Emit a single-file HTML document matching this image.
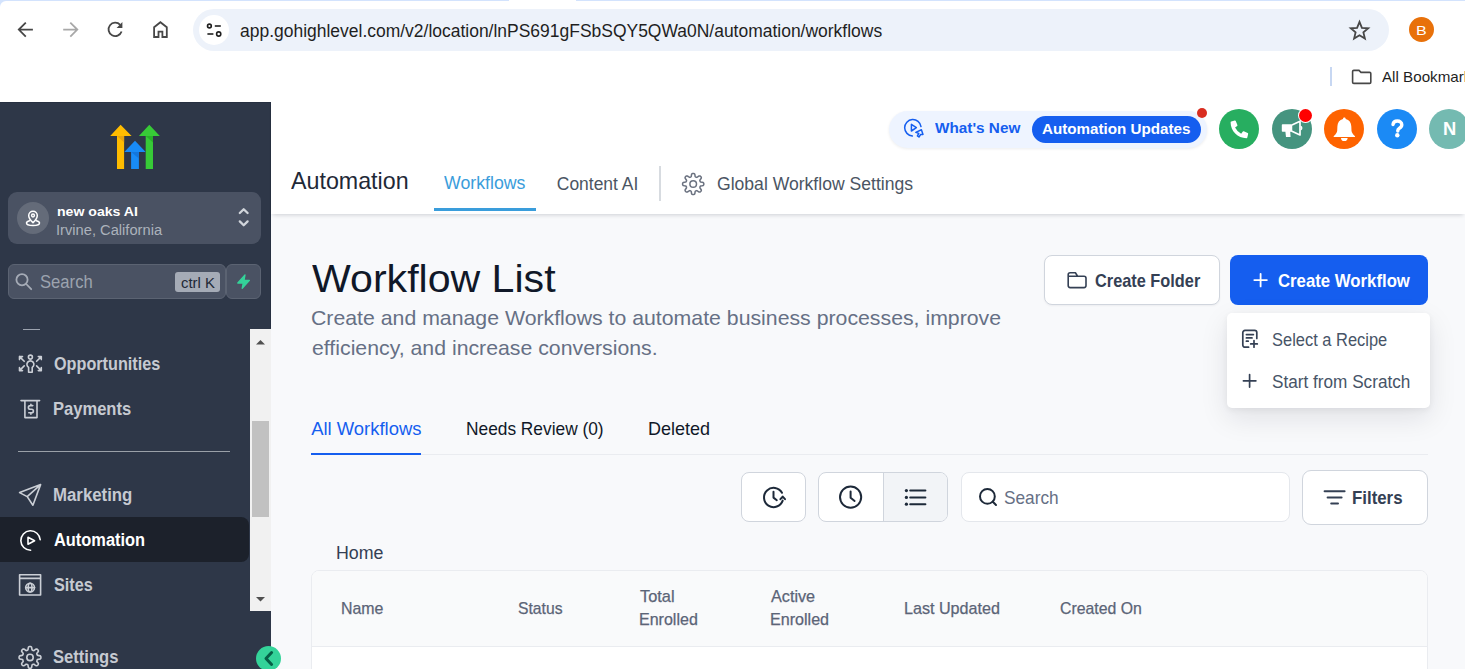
<!DOCTYPE html>
<html><head><meta charset="utf-8">
<style>
*{margin:0;padding:0;box-sizing:border-box}
html,body{width:1465px;height:669px;overflow:hidden;background:#fff;font-family:"Liberation Sans",sans-serif}
.a{position:absolute}
.t{position:absolute;white-space:nowrap;line-height:1}
</style></head><body>
<!-- ===== Browser chrome ===== -->
<div class="a" style="left:0;top:0;width:1465px;height:102px;background:#fff"></div>
<div class="a" style="left:0;top:0;width:1465px;height:10px;background:#d3e3fd"></div>
<div class="a" style="left:0;top:1px;width:1465px;height:20px;background:#fff;border-top-left-radius:6px"></div>
<div class="a" style="left:509px;top:0;width:67px;height:3px;background:#fff"></div>
<div class="a" style="left:193px;top:9px;width:1196px;height:42px;border-radius:21px;background:#edf2fa"></div>
<div class="a" style="left:199px;top:15px;width:30px;height:30px;border-radius:50%;background:#fff"></div>
<div class="a" style="left:1409px;top:17px;width:25px;height:25px;border-radius:50%;background:#e8710a"></div>
<div class="a" style="left:1330px;top:67px;width:2px;height:19px;background:#c7d7f2"></div>
<!-- ===== Sidebar ===== -->
<div class="a" style="left:0;top:102px;width:271px;height:567px;background:#2e3748"></div>
<div class="a" style="left:0;top:102px;width:271px;height:1px;background:#273041"></div>
<div class="a" style="left:270px;top:102px;width:1px;height:226px;background:#273041"></div>
<div class="a" style="left:8px;top:192px;width:253px;height:52px;border-radius:9px;background:#4a5263"></div>
<div class="a" style="left:17px;top:202px;width:32px;height:32px;border-radius:50%;background:#646b79"></div>
<div class="a" style="left:8px;top:264px;width:218px;height:35px;border-radius:6px;background:#4a5263;border:1px solid #5b6372"></div>
<div class="a" style="left:175px;top:272px;width:45px;height:20px;border-radius:3px;background:#a5abb6"></div>
<div class="a" style="left:226px;top:264px;width:35px;height:35px;border-radius:6px;background:#4a5263;border:1px solid #5b6372"></div>
<div class="a" style="left:250px;top:329px;width:21px;height:282px;background:#f1f1f1"></div>
<div class="a" style="left:252px;top:421px;width:17px;height:96px;background:#c1c1c1"></div>
<div class="a" style="left:0;top:517px;width:249px;height:45px;border-radius:0 8px 8px 0;background:#1c212b"></div>
<div class="a" style="left:23px;top:329px;width:17px;height:1px;background:#9ca3af"></div>
<div class="a" style="left:18px;top:451px;width:212px;height:1px;background:#9aa0a8"></div>
<!-- ===== Main ===== -->
<div class="a" style="left:271px;top:102px;width:1194px;height:567px;background:#f8f9fb"></div>
<div class="a" style="left:271px;top:102px;width:1194px;height:112px;background:#fff;box-shadow:0 3px 4px -2px rgba(16,24,40,.18)"></div>
<div class="a" style="left:434px;top:208px;width:102px;height:3px;background:#3a9ddb"></div>
<div class="a" style="left:659px;top:166px;width:2px;height:35px;background:#d7dbe0"></div>
<div class="a" style="left:889px;top:111px;width:318px;height:37px;border-radius:19px;background:#eef4ff;box-shadow:0 1px 3px rgba(16,24,40,.08)"></div>
<div class="a" style="left:1032px;top:116px;width:169px;height:27px;border-radius:14px;background:#155eef"></div>
<div class="a" style="left:1197px;top:108px;width:10px;height:10px;border-radius:50%;background:#d92d20"></div>
<div class="a" style="left:1219px;top:109px;width:40px;height:40px;border-radius:50%;background:#27ae60"></div>
<div class="a" style="left:1272px;top:109px;width:40px;height:40px;border-radius:50%;background:#45947f"></div>
<div class="a" style="left:1299px;top:108.5px;width:13px;height:13px;border-radius:50%;background:#ff0000;box-shadow:0 0 0 1px #fff"></div>
<div class="a" style="left:1324px;top:109px;width:40px;height:40px;border-radius:50%;background:#fe6300"></div>
<div class="a" style="left:1377px;top:109px;width:40px;height:40px;border-radius:50%;background:#1b8af5"></div>
<div class="a" style="left:1429px;top:109px;width:40px;height:40px;border-radius:50%;background:#74bab1"></div>
<!-- buttons -->
<div class="a" style="left:1044px;top:255px;width:176px;height:50px;border-radius:8px;background:#fff;border:1px solid #d0d5dd;box-shadow:0 1px 2px rgba(16,24,40,.05)"></div>
<div class="a" style="left:1230px;top:255px;width:198px;height:50px;border-radius:8px;background:#155eef"></div>
<div class="a" style="left:1227px;top:313px;width:203px;height:95px;border-radius:5px;background:#fff;box-shadow:0 10px 28px rgba(16,24,40,.10),0 2px 6px rgba(16,24,40,.06)"></div>
<!-- tabs -->
<div class="a" style="left:311px;top:454px;width:1117px;height:1px;background:#eaecf0"></div>
<div class="a" style="left:311px;top:452.5px;width:110px;height:2.5px;background:#155eef"></div>
<!-- toolbar -->
<div class="a" style="left:741px;top:472px;width:65px;height:50px;border-radius:8px;background:#fff;border:1px solid #d0d5dd"></div>
<div class="a" style="left:818px;top:472px;width:130px;height:50px;border-radius:8px;background:#fff;border:1px solid #d0d5dd;overflow:hidden"><div class="a" style="left:64px;top:0;width:1px;height:48px;background:#d0d5dd"></div><div class="a" style="left:65px;top:0;width:64px;height:48px;background:#f2f4f7"></div></div>
<div class="a" style="left:961px;top:472px;width:329px;height:50px;border-radius:8px;background:#fff;border:1px solid #e4e7ec"></div>
<div class="a" style="left:1302px;top:470px;width:126px;height:55px;border-radius:9px;background:#fff;border:1px solid #d0d5dd"></div>
<!-- table -->
<div class="a" style="left:311px;top:570px;width:1117px;height:110px;border-radius:8px;background:#fff;border:1px solid #eaecf0;overflow:hidden"><div class="a" style="left:0;top:0;width:1117px;height:76px;background:#f9fafb;border-bottom:1px solid #eaecf0"></div></div>
<div class="a" style="left:256px;top:646px;width:25px;height:25px;border-radius:50%;background:#34d399"></div>

<div class="t" style="left:240.00px;top:21.60px;font-size:18.90px;font-weight:400;color:#1f1f1f;transform:scaleX(0.9247);transform-origin:0 0;">app.gohighlevel.com/v2/location/lnPS691gFSbSQY5QWa0N/automation/workflows</div>
<div class="t" style="left:1382.30px;top:68.95px;font-size:15.41px;font-weight:400;color:#1f1f1f;transform:scaleX(0.9850);transform-origin:0 0;">All Bookmarks</div>
<div class="t" style="left:1415.61px;top:23.95px;font-size:13.52px;font-weight:400;color:#fff;transform:scaleX(1.1875);transform-origin:0 0;">B</div>
<div class="t" style="left:56.50px;top:205.23px;font-size:13.66px;font-weight:700;color:#ffffff;transform:scaleX(1.0315);transform-origin:0 0;">new oaks AI</div>
<div class="t" style="left:55.51px;top:223.25px;font-size:14.83px;font-weight:400;color:#acb2bc;transform:scaleX(0.9899);transform-origin:0 0;">Irvine, California</div>
<div class="t" style="left:39.50px;top:273.37px;font-size:18.46px;font-weight:400;color:#9ca3af;transform:scaleX(0.9026);transform-origin:0 0;">Search</div>
<div class="t" style="left:180.90px;top:275.10px;font-size:15.12px;font-weight:400;color:#1f2937;transform:scaleX(0.9872);transform-origin:0 0;">ctrl K</div>
<div class="t" style="left:53.50px;top:355.07px;font-size:18.46px;font-weight:700;color:#c6cad1;transform:scaleX(0.8789);transform-origin:0 0;">Opportunities</div>
<div class="t" style="left:52.57px;top:400.86px;font-size:17.88px;font-weight:700;color:#c6cad1;transform:scaleX(0.9263);transform-origin:0 0;">Payments</div>
<div class="t" style="left:52.89px;top:486.37px;font-size:18.46px;font-weight:700;color:#c6cad1;transform:scaleX(0.9112);transform-origin:0 0;">Marketing</div>
<div class="t" style="left:53.80px;top:531.37px;font-size:18.46px;font-weight:700;color:#ffffff;transform:scaleX(0.8898);transform-origin:0 0;">Automation</div>
<div class="t" style="left:53.80px;top:576.00px;font-size:18.90px;font-weight:700;color:#c6cad1;transform:scaleX(0.8562);transform-origin:0 0;">Sites</div>
<div class="t" style="left:53.00px;top:649.13px;font-size:17.44px;font-weight:700;color:#c6cad1;transform:scaleX(0.9517);transform-origin:0 0;">Settings</div>
<div class="t" style="left:291.40px;top:170.19px;font-size:23.40px;font-weight:400;color:#1f2937;transform:scaleX(0.9939);transform-origin:0 0;">Automation</div>
<div class="t" style="left:444.30px;top:174.93px;font-size:17.44px;font-weight:400;color:#3a9ddb;transform:scaleX(1.0165);transform-origin:0 0;">Workflows</div>
<div class="t" style="left:556.80px;top:175.93px;font-size:17.44px;font-weight:400;color:#4b5563;">Content AI</div>
<div class="t" style="left:717.00px;top:175.93px;font-size:17.44px;font-weight:400;color:#4b5563;transform:scaleX(1.0079);transform-origin:0 0;">Global Workflow Settings</div>
<div class="t" style="left:935.20px;top:120.03px;font-size:15.55px;font-weight:700;color:#155eef;transform:scaleX(0.9848);transform-origin:0 0;">What's New</div>
<div class="t" style="left:1042.30px;top:122.35px;font-size:14.83px;font-weight:700;color:#ffffff;transform:scaleX(1.0242);transform-origin:0 0;">Automation Updates</div>
<div class="t" style="left:1442.78px;top:119.64px;font-size:18.02px;font-weight:700;color:#ffffff;transform:scaleX(1.0182);transform-origin:0 0;">N</div>
<div class="t" style="left:311.80px;top:260.29px;font-size:38.52px;font-weight:400;color:#101828;transform:scaleX(1.0669);transform-origin:0 0;">Workflow List</div>
<div class="t" style="left:310.58px;top:308.38px;font-size:20.93px;font-weight:400;color:#667085;transform:scaleX(1.0167);transform-origin:0 0;">Create and manage Workflows to automate business processes, improve</div>
<div class="t" style="left:311.60px;top:338.38px;font-size:20.93px;font-weight:400;color:#667085;transform:scaleX(1.0167);transform-origin:0 0;">efficiency, and increase conversions.</div>
<div class="t" style="left:1094.60px;top:273.01px;font-size:17.59px;font-weight:700;color:#344054;transform:scaleX(0.9289);transform-origin:0 0;">Create Folder</div>
<div class="t" style="left:1278.40px;top:272.79px;font-size:17.73px;font-weight:700;color:#ffffff;transform:scaleX(0.9456);transform-origin:0 0;">Create Workflow</div>
<div class="t" style="left:1272.00px;top:331.12px;font-size:18.75px;font-weight:400;color:#475467;transform:scaleX(0.8778);transform-origin:0 0;">Select a Recipe</div>
<div class="t" style="left:1272.00px;top:373.00px;font-size:18.90px;font-weight:400;color:#475467;transform:scaleX(0.9090);transform-origin:0 0;">Start from Scratch</div>
<div class="t" style="left:311.20px;top:420.27px;font-size:18.46px;font-weight:400;color:#155eef;">All Workflows</div>
<div class="t" style="left:465.76px;top:420.27px;font-size:18.46px;font-weight:400;color:#101828;transform:scaleX(0.9391);transform-origin:0 0;">Needs Review (0)</div>
<div class="t" style="left:647.72px;top:420.27px;font-size:18.46px;font-weight:400;color:#101828;transform:scaleX(0.9760);transform-origin:0 0;">Deleted</div>
<div class="t" style="left:1003.80px;top:488.52px;font-size:18.17px;font-weight:400;color:#667085;transform:scaleX(0.9499);transform-origin:0 0;">Search</div>
<div class="t" style="left:1352.39px;top:489.07px;font-size:18.46px;font-weight:700;color:#344054;transform:scaleX(0.9135);transform-origin:0 0;">Filters</div>
<div class="t" style="left:335.88px;top:545.23px;font-size:17.44px;font-weight:400;color:#344054;transform:scaleX(1.0219);transform-origin:0 0;">Home</div>
<div class="t" style="left:341.31px;top:600.76px;font-size:15.99px;font-weight:400;color:#5b6477;transform:scaleX(0.9948);transform-origin:0 0;-webkit-text-stroke:0.25px #5b6477;">Name</div>
<div class="t" style="left:517.60px;top:600.76px;font-size:15.99px;font-weight:400;color:#5b6477;transform:scaleX(0.9826);transform-origin:0 0;-webkit-text-stroke:0.25px #5b6477;">Status</div>
<div class="t" style="left:640.30px;top:588.66px;font-size:15.99px;font-weight:400;color:#5b6477;transform:scaleX(1.0247);transform-origin:0 0;-webkit-text-stroke:0.25px #5b6477;">Total</div>
<div class="t" style="left:639.29px;top:611.69px;font-size:15.84px;font-weight:400;color:#5b6477;transform:scaleX(1.0130);transform-origin:0 0;-webkit-text-stroke:0.25px #5b6477;">Enrolled</div>
<div class="t" style="left:771.10px;top:588.66px;font-size:15.99px;font-weight:400;color:#5b6477;transform:scaleX(1.0130);transform-origin:0 0;-webkit-text-stroke:0.25px #5b6477;">Active</div>
<div class="t" style="left:770.08px;top:611.69px;font-size:15.84px;font-weight:400;color:#5b6477;transform:scaleX(1.0165);transform-origin:0 0;-webkit-text-stroke:0.25px #5b6477;">Enrolled</div>
<div class="t" style="left:903.59px;top:600.76px;font-size:15.99px;font-weight:400;color:#5b6477;transform:scaleX(1.0085);transform-origin:0 0;-webkit-text-stroke:0.25px #5b6477;">Last Updated</div>
<div class="t" style="left:1059.70px;top:600.76px;font-size:15.99px;font-weight:400;color:#5b6477;transform:scaleX(0.9894);transform-origin:0 0;-webkit-text-stroke:0.25px #5b6477;">Created On</div>
<svg class="a" style="left:0;top:0" width="1465" height="669" viewBox="0 0 1465 669" fill="none">
<!-- chrome icons -->
<g stroke="#474747" stroke-width="1.8" stroke-linecap="butt" stroke-linejoin="miter">
 <path d="M32.9 29.6H19.5 M25.8 22.6L18.8 29.6L25.8 36.6"/>
</g>
<g stroke="#a8a8a8" stroke-width="1.8">
 <path d="M63.2 29.6H76.6 M70.3 22.6L77.3 29.6L70.3 36.6"/>
</g>
<g stroke="#474747" stroke-width="1.8" fill="none">
 <path d="M121.6 31.5 A6.7 6.7 0 1 1 120.2 24.8"/>
 <path d="M122.4 22.1V28.1H116.6Z" fill="#474747" stroke="none"/>
 <path d="M154.1 37V27.2L160.4 22.2L166.8 27.2V37H162.4V31.6H158.5V37Z"/>
 <path d="M1359.50 21.90 L1361.91 27.78 L1368.25 28.26 L1363.40 32.37 L1364.91 38.54 L1359.50 35.20 L1354.09 38.54 L1355.60 32.37 L1350.75 28.26 L1357.09 27.78Z" stroke-width="1.8" stroke-linejoin="miter"/>
 <path d="M1352.6 71.6a1.2 1.2 0 0 1 1.2-1.2h5.2l2 2h8.6a1.2 1.2 0 0 1 1.2 1.2v8.6a1.2 1.2 0 0 1-1.2 1.2h-15.8a1.2 1.2 0 0 1-1.2-1.2z" stroke-width="1.6"/>
</g>
<g stroke="#1f1f1f" stroke-width="1.6">
 <circle cx="209.4" cy="26" r="1.9"/><path d="M214.8 26H220.8"/>
 <path d="M207.4 34H213.4"/><circle cx="218.7" cy="34" r="2.1"/>
</g>
<!-- logo -->
<g>
 <path d="M110.2 135.9L120.6 124.7L131.6 135.9H124.1V168.9H117V135.9Z" fill="#ffbc00"/>
 <path d="M124.3 151.9L135 140.8L145.7 151.9H138.9V168.9H131.1V151.9Z" fill="#188bf6"/>
 <path d="M138.9 135.9L149.3 124.7L159.8 135.9H153V168.9H145.7V135.9Z" fill="#37ca37"/>
 <path d="M117 135.9H124.1V142.6Z" fill="#e5a30f"/>
 <path d="M131.1 151.9H138.9V158.6Z" fill="#1476db"/>
 <path d="M145.7 135.9H153V142.6Z" fill="#27b028"/>
</g>
<!-- sidebar icons -->
<g stroke="#ffffff" stroke-width="1.5" fill="none" stroke-linecap="round" stroke-linejoin="round">
 <path d="M33 222.6c0 0 4.3-3.9 4.3-7.1a4.3 4.3 0 0 0-8.6 0c0 3.2 4.3 7.1 4.3 7.1z"/><circle cx="33" cy="215.5" r="1.4"/>
 <path d="M29.6 220.8c-2 .5-3.1 1.3-3.1 2.1 0 1.4 2.9 2.5 6.5 2.5s6.5-1.1 6.5-2.5c0-.8-1.1-1.6-3.1-2.1"/>
</g>
<g stroke="#d1d5db" stroke-width="2.3" fill="none" stroke-linecap="round" stroke-linejoin="round">
 <path d="M239.8 213L243.7 209.2L247.6 213 M239.8 221.4L243.7 225.2L247.6 221.4"/>
</g>
<g stroke="#a5abb6" stroke-width="1.8" fill="none" stroke-linecap="round">
 <circle cx="22" cy="279.7" r="5.6"/><path d="M26.2 284L31.2 289.2"/>
</g>
<path d="M245 275L237.8 283H243.2L242.2 288.4L249.4 280.4H244Z" fill="#34d399" stroke="#34d399" stroke-width="1.3" stroke-linejoin="round"/>
<!-- scrollbar arrows -->
<path d="M256 344.5L260.5 340L265 344.5Z" fill="#505050"/>
<path d="M256 597L260.5 601.5L265 597Z" fill="#505050"/>
<g stroke="#cbcfd6" stroke-width="1.6" fill="none" stroke-linecap="round" stroke-linejoin="round">
 <!-- opportunities -->
 <circle cx="30.4" cy="357.1" r="2"/>
 <path d="M28.6 372.2V367.4A3.5 3.5 0 1 1 32.2 367.4V372.2Z"/>
 <path d="M19.5 356.6L24.2 361.3 M19.5 356.6V359.6 M19.5 356.6H22.5"/>
 <path d="M41.3 356.6L36.6 361.3 M41.3 356.6V359.6 M41.3 356.6H38.3"/>
 <path d="M19.5 370.6L24.2 365.9 M19.5 370.6V367.6 M19.5 370.6H22.5"/>
 <path d="M41.3 370.6L36.6 365.9 M41.3 370.6V367.6 M41.3 370.6H38.3"/>
 <!-- payments -->
 <path d="M21 400.6H39.6 M24.9 400.6V417.6H37V400.6"/>
 <path d="M32.8 405.6h-2.6a1.8 1.8 0 0 0 0 3.6h1.4a1.8 1.8 0 0 1 0 3.6h-2.8 M30.9 404.2V405.6 M30.9 412.8V414.2"/>
 <!-- marketing -->
 <path d="M40.6 484.6L19.6 492.6L27.2 496.6L32.9 505.2Z M40.6 484.6L27.2 496.6"/>
 <!-- sites -->
 <path d="M19.6 574.8H40.6V595H19.6Z M19.6 578.4H40.6"/>
 <circle cx="30.1" cy="587.6" r="4.4"/><path d="M25.7 587.6H34.5"/><ellipse cx="30.1" cy="587.6" rx="1.9" ry="4.4"/>
 <!-- settings gear -->
 <path d="M30.0 646.5 L30.5 646.5 L31.1 646.7 L31.5 647.1 L31.8 648.3 L32.0 649.6 L32.2 650.0 L32.6 650.2 L32.9 650.4 L33.3 650.5 L33.6 650.6 L34.2 650.5 L35.1 649.7 L36.2 649.0 L36.8 649.1 L37.3 649.3 L37.7 649.7 L38.1 650.1 L38.3 650.6 L38.4 651.2 L37.7 652.3 L36.9 653.2 L36.8 653.8 L36.9 654.1 L37.0 654.5 L37.2 654.8 L37.4 655.2 L37.8 655.4 L39.1 655.6 L40.3 655.9 L40.7 656.3 L40.9 656.9 L40.9 657.4 L40.9 657.9 L40.7 658.5 L40.3 658.9 L39.1 659.2 L37.8 659.4 L37.4 659.6 L37.2 660.0 L37.0 660.3 L36.9 660.7 L36.8 661.0 L36.9 661.6 L37.7 662.5 L38.4 663.6 L38.3 664.2 L38.1 664.7 L37.7 665.1 L37.3 665.5 L36.8 665.7 L36.2 665.8 L35.1 665.1 L34.2 664.3 L33.6 664.2 L33.3 664.3 L32.9 664.4 L32.6 664.6 L32.2 664.8 L32.0 665.2 L31.8 666.5 L31.5 667.7 L31.1 668.1 L30.5 668.3 L30.0 668.3 L29.5 668.3 L28.9 668.1 L28.5 667.7 L28.2 666.5 L28.0 665.2 L27.8 664.8 L27.4 664.6 L27.1 664.4 L26.7 664.3 L26.4 664.2 L25.8 664.3 L24.9 665.1 L23.8 665.8 L23.2 665.7 L22.7 665.5 L22.3 665.1 L21.9 664.7 L21.7 664.2 L21.6 663.6 L22.3 662.5 L23.1 661.6 L23.2 661.0 L23.1 660.7 L23.0 660.3 L22.8 660.0 L22.6 659.6 L22.2 659.4 L20.9 659.2 L19.7 658.9 L19.3 658.5 L19.1 657.9 L19.1 657.4 L19.1 656.9 L19.3 656.3 L19.7 655.9 L20.9 655.6 L22.2 655.4 L22.6 655.2 L22.8 654.8 L23.0 654.5 L23.1 654.1 L23.2 653.8 L23.1 653.2 L22.3 652.3 L21.6 651.2 L21.7 650.6 L21.9 650.1 L22.3 649.7 L22.7 649.3 L23.2 649.1 L23.8 649.0 L24.9 649.7 L25.8 650.5 L26.4 650.6 L26.7 650.5 L27.1 650.4 L27.4 650.2 L27.8 650.0 L28.0 649.6 L28.2 648.3 L28.5 647.1 L28.9 646.7 L29.5 646.5Z"/>
 <circle cx="30" cy="657.4" r="3.2"/>
</g>
<g stroke="#ffffff" stroke-width="1.7" fill="none" stroke-linecap="round" stroke-linejoin="round">
 <path d="M30.6 550.2A9.7 9.7 0 1 1 40.2 539.8" stroke-width="1.6"/>
 <path d="M28 537.3V544.3L34.6 540.8Z" stroke-width="1.6"/>
</g>
<path d="M271.6 652.5L266 658.5L271.6 664.5" stroke="#065f46" stroke-width="3" fill="none" stroke-linecap="round" stroke-linejoin="round"/>
<!-- header icons -->
<g stroke="#6b7280" stroke-width="1.5" fill="none" stroke-linejoin="round">
 <path d="M693.2 173.4 L693.7 173.4 L694.2 173.6 L694.7 174.0 L695.0 175.2 L695.1 176.4 L695.4 176.8 L695.7 177.0 L696.0 177.2 L696.4 177.3 L696.7 177.4 L697.2 177.2 L698.2 176.5 L699.2 175.9 L699.9 175.9 L700.3 176.2 L700.7 176.5 L701.0 176.9 L701.3 177.3 L701.3 178.0 L700.7 179.0 L700.0 180.0 L699.8 180.5 L699.9 180.8 L700.0 181.2 L700.2 181.5 L700.4 181.8 L700.8 182.1 L702.0 182.2 L703.2 182.5 L703.6 183.0 L703.8 183.5 L703.8 184.0 L703.8 184.5 L703.6 185.0 L703.2 185.5 L702.0 185.8 L700.8 185.9 L700.4 186.2 L700.2 186.5 L700.0 186.8 L699.9 187.2 L699.8 187.5 L700.0 188.0 L700.7 189.0 L701.3 190.0 L701.3 190.7 L701.0 191.1 L700.7 191.5 L700.3 191.8 L699.9 192.1 L699.2 192.1 L698.2 191.5 L697.2 190.8 L696.7 190.6 L696.4 190.7 L696.0 190.8 L695.7 191.0 L695.4 191.2 L695.1 191.6 L695.0 192.8 L694.7 194.0 L694.2 194.4 L693.7 194.6 L693.2 194.6 L692.7 194.6 L692.2 194.4 L691.7 194.0 L691.4 192.8 L691.3 191.6 L691.0 191.2 L690.7 191.0 L690.4 190.8 L690.0 190.7 L689.7 190.6 L689.2 190.8 L688.2 191.5 L687.2 192.1 L686.5 192.1 L686.1 191.8 L685.7 191.5 L685.4 191.1 L685.1 190.7 L685.1 190.0 L685.7 189.0 L686.4 188.0 L686.6 187.5 L686.5 187.2 L686.4 186.8 L686.2 186.5 L686.0 186.2 L685.6 185.9 L684.4 185.8 L683.2 185.5 L682.8 185.0 L682.6 184.5 L682.6 184.0 L682.6 183.5 L682.8 183.0 L683.2 182.5 L684.4 182.2 L685.6 182.1 L686.0 181.8 L686.2 181.5 L686.4 181.2 L686.5 180.8 L686.6 180.5 L686.4 180.0 L685.7 179.0 L685.1 178.0 L685.1 177.3 L685.4 176.9 L685.7 176.5 L686.1 176.2 L686.5 175.9 L687.2 175.9 L688.2 176.5 L689.2 177.2 L689.7 177.4 L690.0 177.3 L690.4 177.2 L690.7 177.0 L691.0 176.8 L691.3 176.4 L691.4 175.2 L691.7 174.0 L692.2 173.6 L692.7 173.4Z"/>
 <circle cx="693.2" cy="184" r="3.3"/>
</g>
<g stroke="#155eef" stroke-width="1.5" fill="none" stroke-linecap="round" stroke-linejoin="round">
 <path d="M921 126.6A8.2 8.2 0 1 0 912.4 135.9"/>
 <path d="M911.4 124.4V131L916.4 127.7Z"/>
 <path d="M921.4 129.8L923 134.4L920.7 134.4L919 137L917.4 135.8L918.8 133.4L915.8 132.4Z"/>
</g>
<!-- phone -->
<path transform="translate(1230.6 120.6) scale(0.0343)" d="M497.39 361.8l-112-48a24 24 0 0 0-28 6.9l-49.6 60.6A370.66 370.66 0 0 1 130.6 204.11l60.6-49.6a23.94 23.94 0 0 0 6.9-28l-48-112A24.16 24.16 0 0 0 122.6.61l-104 24A24 24 0 0 0 0 48c0 256.5 207.9 464 464 464a24 24 0 0 0 23.4-18.6l24-104a24.29 24.29 0 0 0-14.01-27.6z" fill="#fff"/>
<!-- megaphone -->
<path d="M1282.6 124.2h8.6v7.6h-1l.4 5.2h-4.6l-.6-5.2h-2.8a.8.8 0 0 1-.8-.8v-6a.8.8 0 0 1 .8-.8z" fill="#fff"/>
<path d="M1291.4 125.2L1300 121.2V135L1291.4 131Z" stroke="#fff" stroke-width="1.7" fill="none" stroke-linejoin="round"/>
<path d="M1300.6 126.4a1.8 1.8 0 0 1 0 3.4" stroke="#fff" stroke-width="1.3" fill="none"/>
<!-- bell -->
<path d="M1344.3 117.6c.8 0 1.3.5 1.4 1.3c3.6 .9 5.4 3.6 5.6 7.4l.2 4.4c.1 1.6 1.4 3.6 3.3 5.2c.6.5.3 1.2-.5 1.2h-19.9c-.8 0-1.1-.7-.5-1.2c1.9-1.6 3.2-3.6 3.3-5.2l.2-4.4c.2-3.8 2-6.5 5.6-7.4c.1-.8.6-1.3 1.4-1.3z" fill="#fff"/>
<path d="M1341 137.9h6.6a3.3 3.1 0 0 1-6.6 0z" fill="#fff"/>
<!-- help ? -->
<path d="M1393 124.6c.3-2.2 2-3.6 4.3-3.6c2.5 0 4.5 1.6 4.5 3.8c0 1.8-1 2.7-2.4 3.5c-1.2.7-1.6 1.3-1.6 2.3v.4" stroke="#fff" stroke-width="3.4" fill="none" stroke-linecap="round" stroke-linejoin="round"/>
<circle cx="1397.3" cy="135.2" r="2.2" fill="#fff"/>
<!-- main icons -->
<g stroke="#344054" stroke-width="1.6" fill="none" stroke-linecap="round" stroke-linejoin="round">
 <path d="M1068.2 276.2V285.6a2 2 0 0 0 2 2h13.8a2 2 0 0 0 2-2V278.2a2 2 0 0 0-2-2H1077.6L1075.4 272.8H1070.2a2 2 0 0 0-2 2Z M1068.2 276.2H1077.6"/>
</g>
<path d="M1260.6 273.8V286.4 M1254.3 280.1H1266.9" stroke="#fff" stroke-width="1.8" stroke-linecap="round"/>
<g stroke="#344054" stroke-width="1.7" fill="none" stroke-linecap="round" stroke-linejoin="round">
 <path d="M1248.6 347.2H1245a2.2 2.2 0 0 1-2.2-2.2V332.6a2.2 2.2 0 0 1 2.2-2.2h9.6a2.2 2.2 0 0 1 2.2 2.2V338.4"/>
 <path d="M1246.4 334.6H1253.4 M1246.4 337.9H1252 M1246.4 341.2H1248.2"/>
 <path d="M1254 340.6V347.2 M1250.7 343.9H1257.3"/>
 <path d="M1249.6 374.6V387.1 M1243.4 380.8H1255.9"/>
</g>
<g stroke="#1d2939" stroke-width="2" fill="none" stroke-linecap="round" stroke-linejoin="round">
 <path d="M782 492.8A9.6 9.6 0 1 0 782.7 500.6"/>
 <path d="M773.5 491.8V497.6L776.8 500.2"/>
 <path d="M780.4 499.2L782.7 496.6L785 499.2"/>
 <circle cx="850.6" cy="497.1" r="10.6"/>
 <path d="M850.6 491.6V497.8L854.6 501"/>
 <path d="M910.2 490.6H925.4 M910.2 497.4H925.4 M910.2 504.2H925.4"/>
</g>
<circle cx="906.4" cy="490.6" r="1.6" fill="#1d2939"/><circle cx="906.4" cy="497.4" r="1.6" fill="#1d2939"/><circle cx="906.4" cy="504.2" r="1.6" fill="#1d2939"/>
<g stroke="#1d2939" stroke-width="2" fill="none" stroke-linecap="round">
 <circle cx="987.4" cy="496.4" r="7.4"/><path d="M992.8 501.8L996 505"/>
</g>
<g stroke="#344054" stroke-width="2" fill="none" stroke-linecap="round">
 <path d="M1324.6 491.2H1344.6 M1327.6 497.4H1341.6 M1331.2 503.6H1338"/>
</g>

</svg>
</body></html>
